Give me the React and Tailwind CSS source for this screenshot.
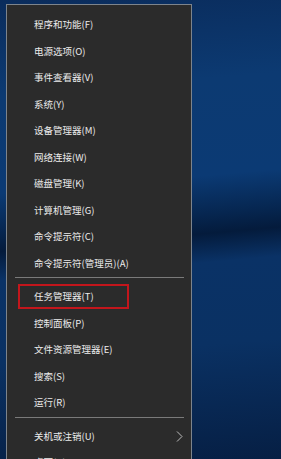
import React from 'react';

const groups = [
    ['程序和功能(F)', '电源选项(O)', '事件查看器(V)', '系统(Y)', '设备管理器(M)', '网络连接(W)', '磁盘管理(K)', '计算机管理(G)', '命令提示符(C)', '命令提示符(管理员)(A)'],
    ['任务管理器(T)', '控制面板(P)', '文件资源管理器(E)', '搜索(S)', '运行(R)'],
    ['关机或注销(U)', '桌面(D)'],
];

export default function App() {
    return (
        <div
            className="w-[281px] h-[459px] overflow-hidden relative bg-[linear-gradient(175deg,#0a2c5c_0%,#0c3a72_20%,#0b3a74_40%,#062650_48%,#041b3c_52%,#0a3266_58%,#0a3163_75%,#061f44_100%)]"
            style={{ fontFamily: '"Noto Sans CJK SC", "Noto Sans", sans-serif' }}
        >
            <div className="ml-[6px] mt-[4px] w-[186px] h-[470px] bg-[#2b2b2b] border-t border-l border-r border-[#7d848c] pt-[6px]">
                {groups.map((items, gi) => (
                    <div key={gi}>
                        {gi > 0 && (
                            <div className="h-[7px] pt-[1px] pl-[8px] pr-[7px]">
                                <div className="h-px bg-[#7a7a7a]" />
                            </div>
                        )}
                        {items.map((label) => (
                            <div key={label} className="relative h-[26.5px] flex items-center pl-[27px] text-[9.5px] text-[#ececec]">
                                {label === '任务管理器(T)' && (
                                    <div className="absolute left-[11px] top-[1px] w-[111px] h-[25px] border-2 border-[#c3161c]" />
                                )}
                                <span>{label}</span>
                                {label === '关机或注销(U)' && (
                                    <svg className="absolute left-[169px] top-[8px]" width="7" height="11" viewBox="0 0 7 11" fill="none">
                                        <path d="M1 0.5L6 5.5L1 10.5" stroke="#bdbdbd" strokeWidth="1" />
                                    </svg>
                                )}
                            </div>
                        ))}
                    </div>
                ))}
            </div>
        </div>
    );
}
